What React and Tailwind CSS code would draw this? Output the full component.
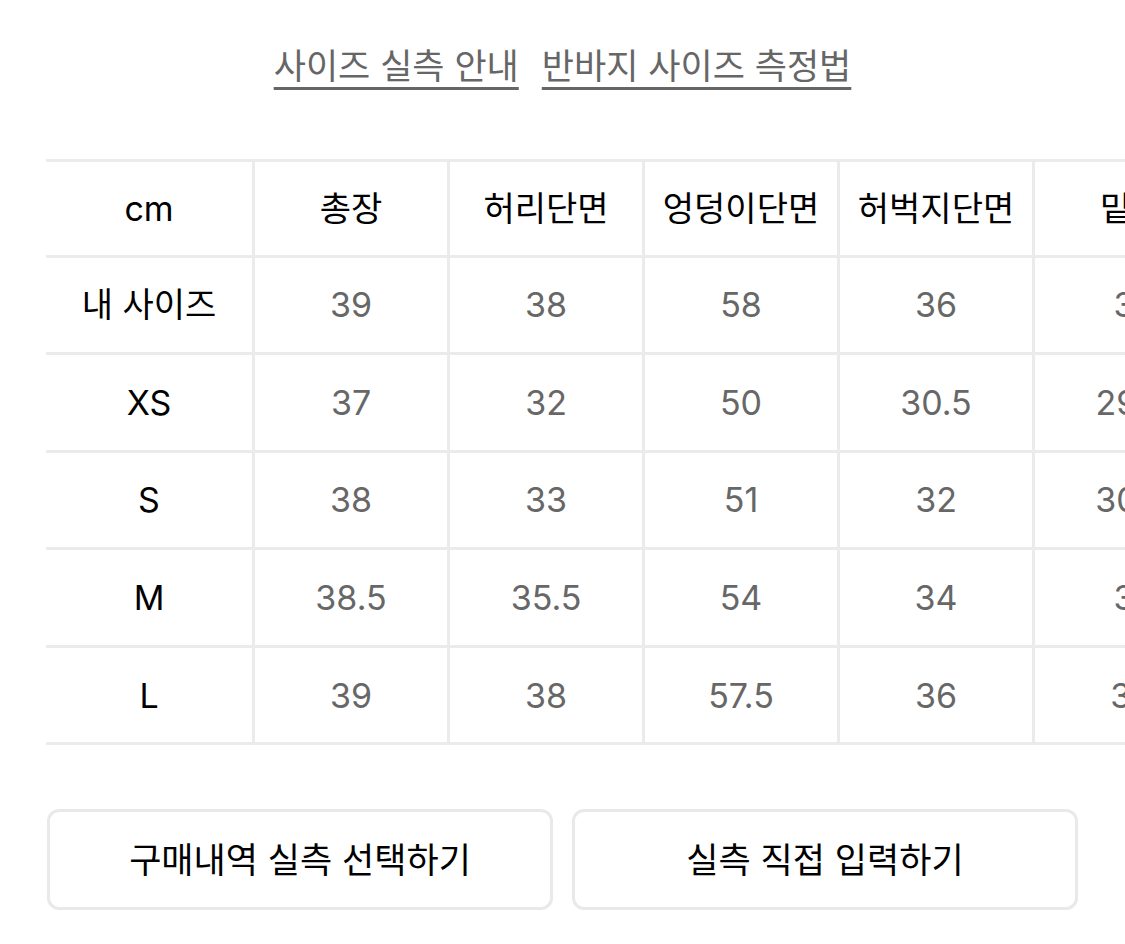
import React from "react";

// 사이즈 표 데이터
const columns = ["총장", "허리단면", "엉덩이단면", "허벅지단면", "밑위"];

const rows = [
  { label: "내 사이즈", values: ["39", "38", "58", "36", "31"] },
  { label: "XS", values: ["37", "32", "50", "30.5", "29.5"] },
  { label: "S", values: ["38", "33", "51", "32", "30.5"] },
  { label: "M", values: ["38.5", "35.5", "54", "34", "31"] },
  { label: "L", values: ["39", "38", "57.5", "36", "32"] },
];

const font = "font-['Inter','Noto_Sans_CJK_KR',sans-serif]";

const LabelCell = ({ children, header }) => (
  <div
    className={`w-[209px] shrink-0 flex items-center justify-center border-b-[3px] border-r-[3px] border-[#ebebeb] text-[34px] text-black ${
      header ? "h-[96px]" : "h-[97.6px]"
    }`}
  >
    {children}
  </div>
);

const Cell = ({ children, header }) => (
  <div
    className={`w-[195px] shrink-0 flex items-center justify-center border-b-[3px] border-r-[3px] border-[#ebebeb] text-[34px] ${
      header ? "h-[96px] text-black" : "h-[97.6px] text-[#676767]"
    }`}
  >
    {children}
  </div>
);

export default function App() {
  return (
    <div className={`w-[1125px] h-[944px] bg-white overflow-hidden ${font}`}>
      {/* 상단 링크 */}
      <div className="flex justify-center gap-[23px] pt-[40px] text-[35px] text-[#666]">
        <span className="underline decoration-[3px] underline-offset-[8px]">사이즈 실측 안내</span>
        <span className="underline decoration-[3px] underline-offset-[8px]">반바지 사이즈 측정법</span>
      </div>

      {/* 사이즈 표 */}
      <div className="mt-[66px] ml-[46px] border-t-[3px] border-[#ebebeb] w-max">
        <div className="flex">
          <LabelCell header>cm</LabelCell>
          {columns.map((c) => (
            <Cell key={c} header>
              {c}
            </Cell>
          ))}
        </div>
        {rows.map((r) => (
          <div key={r.label} className="flex">
            <LabelCell>{r.label}</LabelCell>
            {r.values.map((v, i) => (
              <Cell key={i}>{v}</Cell>
            ))}
          </div>
        ))}
      </div>

      {/* 버튼 */}
      <div className="flex gap-[19px] px-[47px] mt-[64px]">
        <button className="flex-1 h-[101px] rounded-[12px] border-[3px] border-[#e9e9e9] bg-white text-[35px] text-black">
          구매내역 실측 선택하기
        </button>
        <button className="flex-1 h-[101px] rounded-[12px] border-[3px] border-[#e9e9e9] bg-white text-[35px] text-black">
          실측 직접 입력하기
        </button>
      </div>
    </div>
  );
}
